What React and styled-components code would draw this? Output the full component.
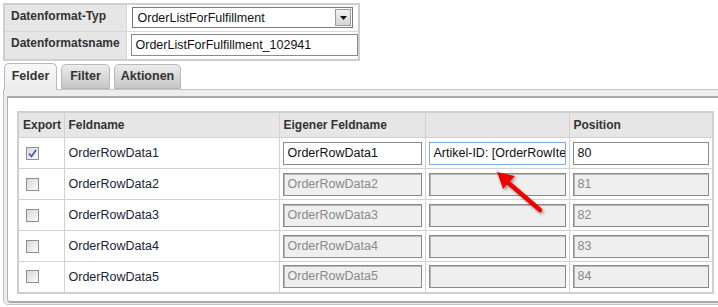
import React from "react";
import styled, { createGlobalStyle } from "styled-components";

const Global = createGlobalStyle`
  html, body {
    margin: 0;
    padding: 0;
    background: #fff;
    overflow: hidden;
  }
  body {
    font-family: "Liberation Sans", Arial, sans-serif;
    font-size: 12px;
    color: #222;
  }
`;

const Page = styled.div`
  width: 740px;
  padding: 3px 0 0 3px;
`;

const FormTable = styled.table`
  border-collapse: collapse;
  border: 2px solid #cfcfcf;
  width: 357px;
  table-layout: fixed;
  td {
    border: 1px solid #d8d8d8;
    padding: 0;
  }
`;

const FormRow = styled.tr`
  height: ${(p) => p.$h}px;
`;

const Label = styled.td`
  background: #e6e6e6;
  font-weight: bold;
  color: #333;
  padding: 0 0 4px 6px !important;
  vertical-align: middle;
  white-space: nowrap;
`;

const Value = styled.td`
  background: #fff;
  padding: 0 3px 0 4px !important;
  vertical-align: middle;
`;

const FakeSelect = styled.div`
  display: flex;
  align-items: center;
  height: 21px;
  box-sizing: border-box;
  border: 1px solid #7a7a7a;
  padding-left: 5px;
  font-size: 12.5px;
  color: #111;
  margin: 0 2px 0 1px;
  span {
    flex: 1;
  }
`;

const DropButton = styled.div`
  width: 16px;
  height: 17px;
  box-sizing: border-box;
  margin: 1px 1px 1px 0;
  border: 1px solid #9a9a9a;
  background: linear-gradient(#f4f4f4, #d4d4d4);
  display: flex;
  align-items: center;
  justify-content: center;
`;

const TextInput = styled.div`
  box-sizing: border-box;
  height: ${(p) => p.$h || 23}px;
  border: 1px solid ${(p) => (p.$focus ? "#7eaee6" : "#8a8a8a")};
  box-shadow: ${(p) => (p.$disabled ? "inset 1px 1px 0 #b8b8b8" : "none")};
  background: ${(p) => (p.$disabled ? "#efefef" : "#fff")};
  color: ${(p) => (p.$disabled ? "#8a8a8a" : "#111")};
  font-size: 12.5px;
  line-height: ${(p) => (p.$h || 23) - 2}px;
  padding-left: 4px;
  white-space: nowrap;
  overflow: hidden;
  width: ${(p) => p.$w || "100%"};
`;

const Tabs = styled.div`
  display: flex;
  align-items: flex-end;
  gap: 4px;
  height: 26px;
  margin-top: 2px;
  padding-left: 1px;
  position: relative;
  z-index: 1;
`;

const Tab = styled.div`
  box-sizing: border-box;
  width: ${(p) => p.$w}px;
  height: ${(p) => (p.$active ? 27 : 25)}px;
  margin-bottom: ${(p) => (p.$active ? -1 : 0)}px;
  padding-bottom: ${(p) => (p.$active ? 3 : 1)}px;
  border: 1px solid #b8b8b8;
  border-bottom: ${(p) => (p.$active ? "none" : "1px solid #b8b8b8")};
  border-radius: 5px 5px 0 0;
  background: ${(p) =>
    p.$active
      ? "linear-gradient(#f8f8f8, #ececec)"
      : "linear-gradient(#ececec, #c6c6c6)"};
  font-weight: bold;
  font-size: 12.5px;
  color: #333;
  display: flex;
  align-items: center;
  justify-content: center;
`;

const Panel = styled.div`
  background: #ededed;
  border-top: 1px solid #c4c4c4;
  border-left: 1px solid #bdbdbd;
  border-bottom: 1px solid #c4c4c4;
  padding: 6px 0 1px 3px;
  border-radius: 0 0 0 5px;
`;

const PanelInner = styled.div`
  background: #fff;
  border-top: 2px solid #a9a9a9;
  border-left: 1px solid #b0b0b0;
  border-bottom: 2px solid #a9a9a9;
  border-radius: 0 0 0 4px;
  padding: 13px 0 7px 9px;
`;

const Grid = styled.table`
  border-collapse: collapse;
  table-layout: fixed;
  border: 2px solid #cfcfcf;
  width: 697px;
  th, td {
    border: 1px solid #d2d2d2;
  }
`;

const Head = styled.th`
  background: #e6e6e6;
  font-weight: bold;
  color: #333;
  text-align: left;
  height: 24px;
  padding: 0 0 0 4px;
  font-size: 12px;
  white-space: nowrap;
  overflow: hidden;
`;

const BodyRow = styled.tr`
  height: 31px;
`;

const Cell = styled.td`
  padding: 0 ${(p) => (p.$pad ? "3px" : "4px")};
  font-size: 12.5px;
  color: #1c2433;
  vertical-align: middle;
  overflow: hidden;
`;

const CheckCell = styled.td`
  padding: 0 0 0 7px;
`;

const Box = styled.div`
  width: 13px;
  height: 13px;
  box-sizing: border-box;
  border: 1px solid #8e8f8f;
  background: linear-gradient(135deg, #d8d8d8, #fbfbfb);
  display: flex;
  align-items: center;
  justify-content: center;
`;

const Arrow = styled.svg`
  position: absolute;
  left: 485px;
  top: 160px;
  pointer-events: none;
`;

const Wrap = styled.div`
  position: relative;
`;

const rows = [1, 2, 3, 4, 5];

function Check({ checked }) {
  return (
    <Box>
      {checked && (
        <svg width="9" height="9" viewBox="0 0 9 9">
          <path d="M1 4.5 L3.5 7.5 L8 1" fill="none" stroke="#3b56a8" strokeWidth="1.6" />
        </svg>
      )}
    </Box>
  );
}

export default function App() {
  return (
    <Wrap>
      <Global />
      <Page>
        <FormTable>
          <colgroup>
            <col style={{ width: 122 }} />
            <col />
          </colgroup>
          <tbody>
            <FormRow $h={27}>
              <Label>Datenformat-Typ</Label>
              <Value>
                <FakeSelect>
                  <span>OrderListForFulfillment</span>
                  <DropButton>
                    <svg width="7" height="4" viewBox="0 0 7 4">
                      <path d="M0 0 H7 L3.5 4 Z" fill="#111" />
                    </svg>
                  </DropButton>
                </FakeSelect>
              </Value>
            </FormRow>
            <FormRow $h={29}>
              <Label>Datenformatsname</Label>
              <Value>
                <TextInput $w="227px" $h={22}>OrderListForFulfillment_102941</TextInput>
              </Value>
            </FormRow>
          </tbody>
        </FormTable>

        <Tabs>
          <Tab $active $w={53}>Felder</Tab>
          <Tab $w={49}>Filter</Tab>
          <Tab $w={67}>Aktionen</Tab>
        </Tabs>
        <Panel>
          <PanelInner>
            <Grid>
              <colgroup>
                <col style={{ width: 46 }} />
                <col style={{ width: 215 }} />
                <col style={{ width: 146 }} />
                <col style={{ width: 144 }} />
                <col />
              </colgroup>
              <thead>
                <tr>
                  <Head>Export</Head>
                  <Head>Feldname</Head>
                  <Head>Eigener Feldname</Head>
                  <Head></Head>
                  <Head>Position</Head>
                </tr>
              </thead>
              <tbody>
                {rows.map((n) => {
                  const on = n === 1;
                  return (
                    <BodyRow key={n}>
                      <CheckCell>
                        <Check checked={on} />
                      </CheckCell>
                      <Cell>OrderRowData{n}</Cell>
                      <Cell $pad>
                        <TextInput $disabled={!on}>OrderRowData{n}</TextInput>
                      </Cell>
                      <Cell $pad>
                        <TextInput $disabled={!on} $focus={on}>
                          {on ? "Artikel-ID: [OrderRowIte" : ""}
                        </TextInput>
                      </Cell>
                      <Cell $pad>
                        <TextInput $disabled={!on}>{79 + n}</TextInput>
                      </Cell>
                    </BodyRow>
                  );
                })}
              </tbody>
            </Grid>
          </PanelInner>
        </Panel>
      </Page>
      <Arrow width="70" height="60" viewBox="0 0 70 60">
        <defs>
          <filter id="sh" x="-20%" y="-20%" width="150%" height="150%">
            <feDropShadow dx="1.5" dy="2" stdDeviation="1.5" floodColor="#000" floodOpacity="0.35" />
          </filter>
        </defs>
        <g filter="url(#sh)">
          <line x1="55" y1="50" x2="20" y2="20" stroke="#ee0000" strokeWidth="4.5" strokeLinecap="round" />
          <path d="M12 12 L30 16 L18 29 Z" fill="#ee0000" />
        </g>
      </Arrow>
    </Wrap>
  );
}
